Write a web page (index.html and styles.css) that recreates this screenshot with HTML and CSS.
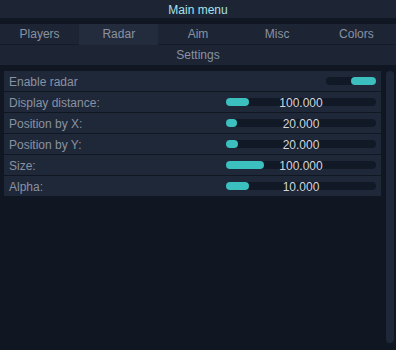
FILE: index.html
```html
<!DOCTYPE html>
<html lang="en">
  <head>
    <meta charset="UTF-8" />
    <title>Main menu</title>
    <link rel="stylesheet" href="styles.css">
  </head>
  <body>
    <div class="title">Main menu</div>
    <nav class="tabs">
      <div class="tab">Players</div>
      <div class="tab active">Radar</div>
      <div class="tab">Aim</div>
      <div class="tab">Misc</div>
      <div class="tab">Colors</div>
    </nav>
    <div class="subtitle">Settings</div>
    <main class="content">
      <div class="list">
        <div class="row">
          <span class="label">Enable radar</span>
          <div class="toggle"><div class="knob"></div></div>
        </div>
        <div class="row">
          <span class="label">Display distance:</span>
          <div class="slider"><div class="fill" style="width: 23px"></div><span class="value">100.000</span></div>
        </div>
        <div class="row">
          <span class="label">Position by X:</span>
          <div class="slider"><div class="fill" style="width: 11px"></div><span class="value">20.000</span></div>
        </div>
        <div class="row">
          <span class="label">Position by Y:</span>
          <div class="slider"><div class="fill" style="width: 12px"></div><span class="value">20.000</span></div>
        </div>
        <div class="row">
          <span class="label">Size:</span>
          <div class="slider"><div class="fill" style="width: 38px"></div><span class="value">100.000</span></div>
        </div>
        <div class="row">
          <span class="label">Alpha:</span>
          <div class="slider"><div class="fill" style="width: 23px"></div><span class="value">10.000</span></div>
        </div>
      </div>
      <div class="scrollbar"></div>
    </main>
  </body>
</html>
```

FILE: styles.css
```css
* {
  margin: 0;
  padding: 0;
  box-sizing: border-box;
  font-family: 'Liberation Sans', Arial, sans-serif;
}

body {
  background-color: #111722;
  color: #8a92a1;
  font-size: 12px;
  height: 350px;
  overflow: hidden;
}

.title {
  height: 18px;
  line-height: 20px;
  text-align: center;
  background-color: #1d2535;
  color: #a6e2ea;
  margin-bottom: 6px;
}

.tabs {
  display: grid;
  grid-template-columns: repeat(5, 1fr);
  height: 21px;
  background-color: #1d2535;
  border-bottom: 1px solid #151b27;
}

.tab {
  text-align: center;
  line-height: 21px;
}

.tab.active {
  background-color: #232c3d;
}

.subtitle {
  height: 20px;
  line-height: 21px;
  text-align: center;
  background-color: #1d2535;
}

.content {
  display: flex;
  padding: 6px 2px 0 4px;
  gap: 5px;
}

.list {
  width: 377px;
  display: flex;
  flex-direction: column;
  gap: 1px;
}

.row {
  height: 20px;
  display: flex;
  align-items: center;
  justify-content: space-between;
  padding: 1px 5px 0;
  background-color: #1f2839;
}

.label {
  line-height: 20px;
}

.toggle {
  width: 50px;
  height: 8px;
  margin-top: -1px;
  border-radius: 4px;
  background-color: #121926;
  display: flex;
  justify-content: flex-end;
}

.knob {
  width: 25px;
  height: 8px;
  border-radius: 4px;
  background-color: #3cbfbf;
}

.slider {
  position: relative;
  width: 150px;
  height: 8px;
  margin-top: -1px;
  border-radius: 4px;
  background-color: #121926;
}

.fill {
  height: 8px;
  border-radius: 4px;
  background-color: #3cbfbf;
}

.value {
  position: absolute;
  left: 0;
  right: 0;
  top: -3px;
  line-height: 16px;
  text-align: center;
  color: #d2d6de;
}

.scrollbar {
  width: 8px;
  height: 272px;
  border-radius: 4px;
  background-color: #1f2839;
}
```
